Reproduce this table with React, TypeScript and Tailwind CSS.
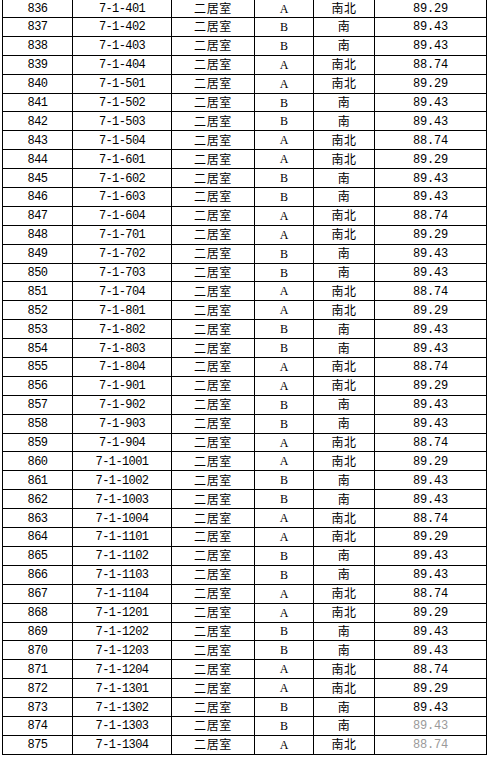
import React from "react";

type Row = { no: number; room: string; type: string; kind: string; dir: string; area: string };

const units = [
  { kind: "A", dir: "南北", area: "89.29" },
  { kind: "B", dir: "南", area: "89.43" },
  { kind: "B", dir: "南", area: "89.43" },
  { kind: "A", dir: "南北", area: "88.74" },
];

const rows: Row[] = [];
let n = 836;
for (let floor = 4; floor <= 13; floor++) {
  for (let u = 1; u <= 4; u++) {
    const un = units[u - 1];
    rows.push({
      no: n++,
      room: `7-1-${floor}0${u}`,
      type: "二居室",
      kind: un.kind,
      dir: un.dir,
      area: un.area,
    });
  }
}

const mono = "font-['Liberation_Mono',monospace] text-[12px] tracking-[-0.6px] pt-[1px]";
const monoWide = "font-['Liberation_Mono',monospace] text-[12px] tracking-[-0.2px] pt-[1px]";
const serif = "font-['Liberation_Serif',serif] text-[12px]";
const cjk = "font-['Noto_Sans_CJK_SC','Noto_Sans_CJK_JP',sans-serif] text-[12px] tracking-[0.6px] pb-[1px]";

export default function App() {
  return (
    <div className="w-[490px] h-[758px] overflow-hidden bg-white text-black">
      <div className="ml-[2px] w-[485px] border-l border-black">
        {rows.map((r, i) => {
          const faded = i >= rows.length - 2;
          return (
            <div
              key={r.no}
              className={
                i === 0
                  ? "flex h-[18px] border-b border-black items-stretch leading-none"
                  : "flex h-[18.9px] border-b border-black items-stretch leading-none"
              }
            >
              <div className={`w-[70px] border-r border-black flex items-center justify-center ${mono}`}>{r.no}</div>
              <div className={`w-[99px] border-r border-black flex items-center justify-center ${mono}`}>{r.room}</div>
              <div className={`w-[83px] border-r border-black flex items-center justify-center ${cjk}`}>{r.type}</div>
              <div className={`w-[59px] border-r border-black flex items-center justify-center ${serif}`}>{r.kind}</div>
              <div className={`w-[61px] border-r border-black flex items-center justify-center ${cjk}`}>{r.dir}</div>
              <div
                className={
                  faded
                    ? `w-[112px] border-r border-black flex items-center justify-center text-[#9a9a9a] ${monoWide}`
                    : `w-[112px] border-r border-black flex items-center justify-center ${monoWide}`
                }
              >
                {r.area}
              </div>
            </div>
          );
        })}
      </div>
    </div>
  );
}
